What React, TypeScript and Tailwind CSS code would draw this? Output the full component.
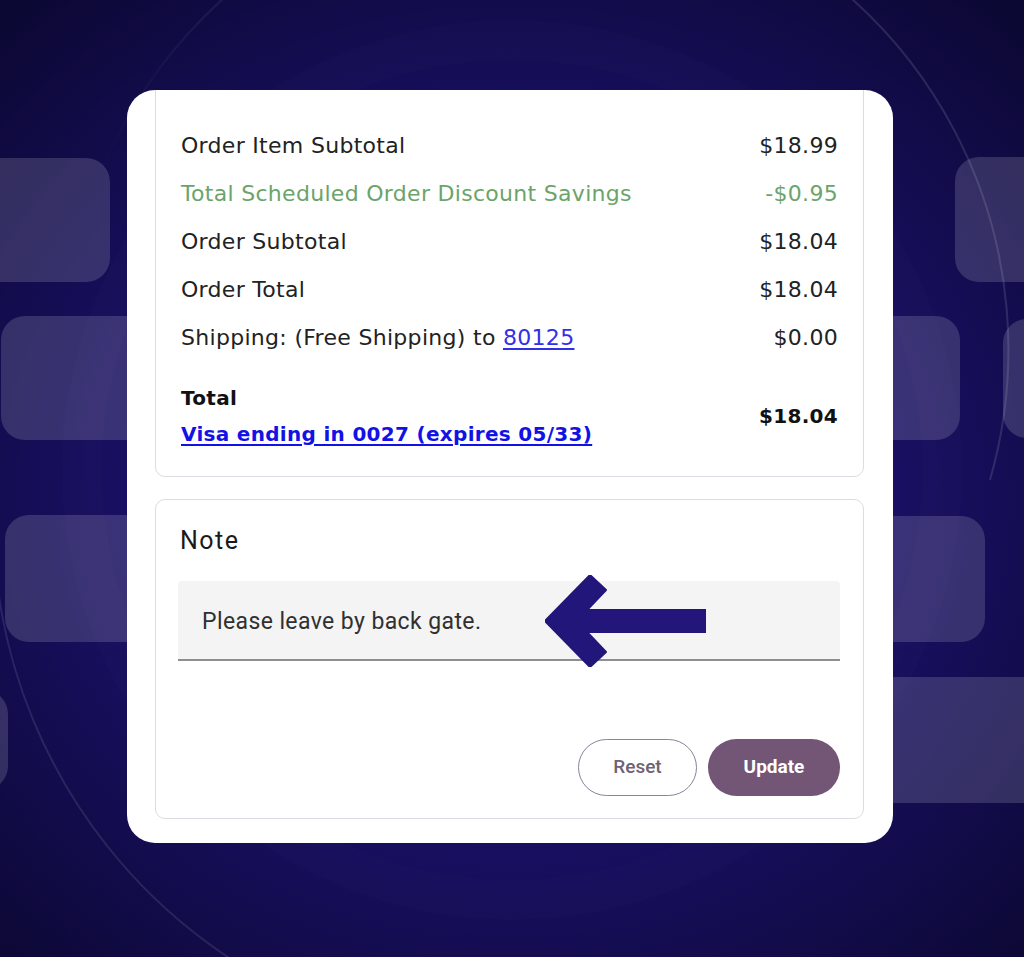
import React from "react";

const rowFont = { fontFamily: '"DejaVu Sans", "Noto Sans", sans-serif' };
const roboto = { fontFamily: 'Roboto, "Noto Sans", sans-serif' };

function Row({ label, value, green }: { label: React.ReactNode; value: string; green?: boolean }) {
  return (
    <div
      className={`flex h-[48px] items-center justify-between text-[22px] tracking-[0.3px] ${
        green ? "text-[#6ba46a]" : "text-[#222222]"
      }`}
    >
      <span>{label}</span>
      <span>{value}</span>
    </div>
  );
}

function Arrow() {
  return (
    <svg
      className="absolute left-[367px] top-[-6px]"
      width="161"
      height="92"
      viewBox="0 0 161 92"
    >
      <polygon
        points="0,46 45,0 61,15 42,35 161,35 161,57 42,57 61,77 45,92"
        fill="#23167a"
        stroke="#23167a"
        strokeWidth="2"
        strokeLinejoin="round"
      />
    </svg>
  );
}

export default function App() {
  return (
    <div
      className="relative h-[957px] w-[1024px] overflow-hidden"
      style={{
        background:
          "radial-gradient(ellipse 72% 68% at 50% 52%, #25168c 0%, #1c116e 40%, #140d52 70%, #0c0834 100%)",
      }}
    >
      {/* decorative arcs */}
      <svg className="absolute inset-0" width="1024" height="957" viewBox="0 0 1024 957">
        <defs>
          <linearGradient id="fadeL" x1="0" y1="0" x2="1" y2="0">
            <stop offset="0" stopColor="white" stopOpacity="0" />
            <stop offset="0.25" stopColor="white" stopOpacity="0.12" />
            <stop offset="1" stopColor="white" stopOpacity="0.12" />
          </linearGradient>
        </defs>
        <path d="M 98 180 A 471 471 0 0 1 990 480" fill="none" stroke="url(#fadeL)" strokeWidth="2" />
        <path d="M -2 590 A 527 527 0 0 0 330 1010" fill="none" stroke="rgba(255,255,255,0.1)" strokeWidth="2" />
        <circle cx="512" cy="470" r="430" fill="none" stroke="rgba(255,255,255,0.012)" strokeWidth="40" />
      </svg>

      {/* decorative tiles */}
      <div className="absolute left-[-40px] top-[158px] h-[124px] w-[150px] rounded-[24px] bg-white/15" />
      <div className="absolute left-[1px] top-[316px] h-[124px] w-[200px] rounded-[24px] bg-white/15" />
      <div className="absolute left-[5px] top-[515px] h-[127px] w-[200px] rounded-[24px] bg-white/15" />
      <div className="absolute left-[-140px] top-[690px] h-[100px] w-[148px] rounded-[24px] bg-white/15" />
      <div className="absolute left-[955px] top-[157px] h-[125px] w-[150px] rounded-[24px] bg-white/15" />
      <div className="absolute left-[820px] top-[316px] h-[124px] w-[140px] rounded-[24px] bg-white/15" />
      <div className="absolute left-[1003px] top-[319px] h-[119px] w-[120px] rounded-[24px] bg-white/15" />
      <div className="absolute left-[820px] top-[516px] h-[126px] w-[165px] rounded-[24px] bg-white/15" />
      <div className="absolute left-[820px] top-[677px] h-[126px] w-[260px] rounded-[24px] bg-white/15" />

      <div className="relative pl-[127px] pt-[90px]">
        <div className="w-[766px] overflow-hidden rounded-[28px] bg-white pb-[24px] pl-[28px] pr-[29px]" style={rowFont}>
          {/* summary box */}
          <div className="-mt-[10px] rounded-[10px] border border-[#dcdce2] pb-[24px] pl-[25px] pr-[25px] pt-[40px]">
            <Row label="Order Item Subtotal" value="$18.99" />
            <Row label="Total Scheduled Order Discount Savings" value="-$0.95" green />
            <Row label="Order Subtotal" value="$18.04" />
            <Row label="Order Total" value="$18.04" />
            <Row
              label={
                <>
                  Shipping: (Free Shipping) to{" "}
                  <a href="#" className="text-[#3030e8] underline underline-offset-[3px]">
                    80125
                  </a>
                </>
              }
              value="$0.00"
            />
            <div className="mt-[19px] flex items-center justify-between">
              <div className="flex flex-col text-[20px] font-bold tracking-[0.3px]">
                <span className="flex h-[36px] items-center text-[#111111]">Total</span>
                <a
                  href="#"
                  className="flex h-[36px] items-center text-[#1212e6] underline underline-offset-[3px]"
                >
                  Visa ending in 0027 (expires 05/33)
                </a>
              </div>
              <span className="text-[20px] font-bold tracking-[0.3px] text-[#111111]">$18.04</span>
            </div>
          </div>

          {/* note box */}
          <div className="mt-[22px] rounded-[10px] border border-[#dcdce2] pb-[22px] pl-[22px] pr-[23px] pt-[26px]" style={roboto}>
            <div className="flex h-[30px] items-center pl-[2px] text-[25px] tracking-[1.5px] text-[#1a1a1a]">Note</div>
            <div className="relative mt-[25px] flex h-[80px] items-center rounded-t-[4px] border-b-2 border-[#8f8f8f] bg-[#f4f4f4] pl-[24px] pt-[4px] text-[23px] tracking-[0.4px] text-[#303030]">
              Please leave by back gate.
              <Arrow />
            </div>
            <div className="mt-[78px] flex justify-end gap-[11px]">
              <button className="flex h-[57px] w-[119px] items-center justify-center rounded-full border border-[#8c8299] bg-white text-[19px] font-medium text-[#6e6275]">
                Reset
              </button>
              <button className="flex h-[57px] w-[132px] items-center justify-center rounded-full bg-[#735676] text-[19px] font-bold text-white">
                Update
              </button>
            </div>
          </div>
        </div>
      </div>
    </div>
  );
}
